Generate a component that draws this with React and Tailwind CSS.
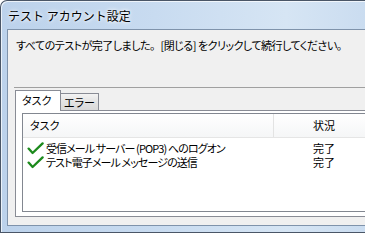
import React from "react";

const rows = [
  { task: "受信メール サーバー (POP3) へのログオン", status: "完了" },
  { task: "テスト電子メール メッセージの送信", status: "完了" },
];

function Check() {
  return (
    <svg width="17" height="13" viewBox="0 0 17 13" className="shrink-0">
      <path
        d="M1.6 6.6 L5.6 11 L15.6 1.4"
        fill="none"
        stroke="#1c8a1c"
        strokeWidth="2.3"
        strokeLinecap="round"
        strokeLinejoin="round"
      />
    </svg>
  );
}

export default function App() {
  return (
    <div className="w-[365px] h-[233px] overflow-hidden bg-white font-['Noto_Sans_CJK_JP','Noto_Sans',sans-serif] text-[11px] text-black">
      <div className="w-[440px] h-[233px] flex flex-col rounded-tl-[7px] border-l border-t border-b border-[#4a5667] bg-[linear-gradient(90deg,#bcd2eb_0%,#c8dbf0_35%,#d6e5f4_65%,#bfd4ec_100%)] shadow-[inset_1px_1px_0_rgba(255,255,255,0.7)]">
        {/* title bar */}
        <div className="h-[28px] shrink-0 flex items-center pl-[7px] pt-[1px] text-[12px] [text-shadow:0_0_5px_white,0_0_3px_white]">
          テスト アカウント設定
        </div>

        <div className="flex flex-1 pl-[6px]">
          {/* client area */}
          <div className="flex-1 flex flex-col border-l border-t border-b border-[#7f93ab] bg-[#f0f0f0]">
            <div className="h-[57px] shrink-0 pt-[7px] pl-[8px] leading-[16px] whitespace-nowrap tracking-[-0.5px] [font-feature-settings:'palt']">
              すべてのテストが完了しました<span className="[font-feature-settings:normal]">。</span>[閉じる] をクリックして続行してください。
            </div>
            <div className="ml-[6px] h-[3px] shrink-0 border-t border-[#a0a0a0]" />

            <div className="ml-[7px]">
              {/* tabs */}
              <div className="flex items-end h-[20px]">
                <div className="relative z-10 w-[46px] h-[21px] mb-[-1px] border-l border-t border-r border-[#898c95] bg-white pl-[6px] leading-[19px] [font-feature-settings:'palt']">
                  タスク
                </div>
                <div className="ml-[-1px] w-[39px] h-[17px] border-t border-r border-[#898c95] bg-[linear-gradient(180deg,#f3f3f3,#e3e3e3_50%,#d9d9d9)] pl-[4px] leading-[16px] [font-feature-settings:'palt']">
                  エラー
                </div>
              </div>

              {/* tab panel */}
              <div className="h-[107px] border border-[#898c95] bg-white pt-[2px] pl-[6px] pb-[4px]">
                <div className="h-[99px] border border-[#828790] bg-white [font-feature-settings:'palt']">
                  <div className="h-[24px] flex items-center border-b border-[#e5e5e5] bg-[linear-gradient(180deg,#ffffff,#f5f6f7)]">
                    <div className="w-[251px] h-full flex items-center pl-[7px] border-r border-[#e3e3e3]">
                      タスク
                    </div>
                    <div className="pl-[39px]">状況</div>
                  </div>
                  <div className="pt-[3px]">
                    {rows.map((r) => (
                      <div key={r.task} className="h-[14px] flex items-center leading-[14px]">
                        <div className="w-[251px] flex items-center gap-[2px] pl-[4px]">
                          <Check />
                          <span className="tracking-[-0.9px] whitespace-nowrap">{r.task}</span>
                        </div>
                        <div className="pl-[39px]">{r.status}</div>
                      </div>
                    ))}
                  </div>
                </div>
              </div>
            </div>
          </div>
        </div>

        {/* bottom frame */}
        <div className="h-[6px] shrink-0" />
      </div>
    </div>
  );
}
